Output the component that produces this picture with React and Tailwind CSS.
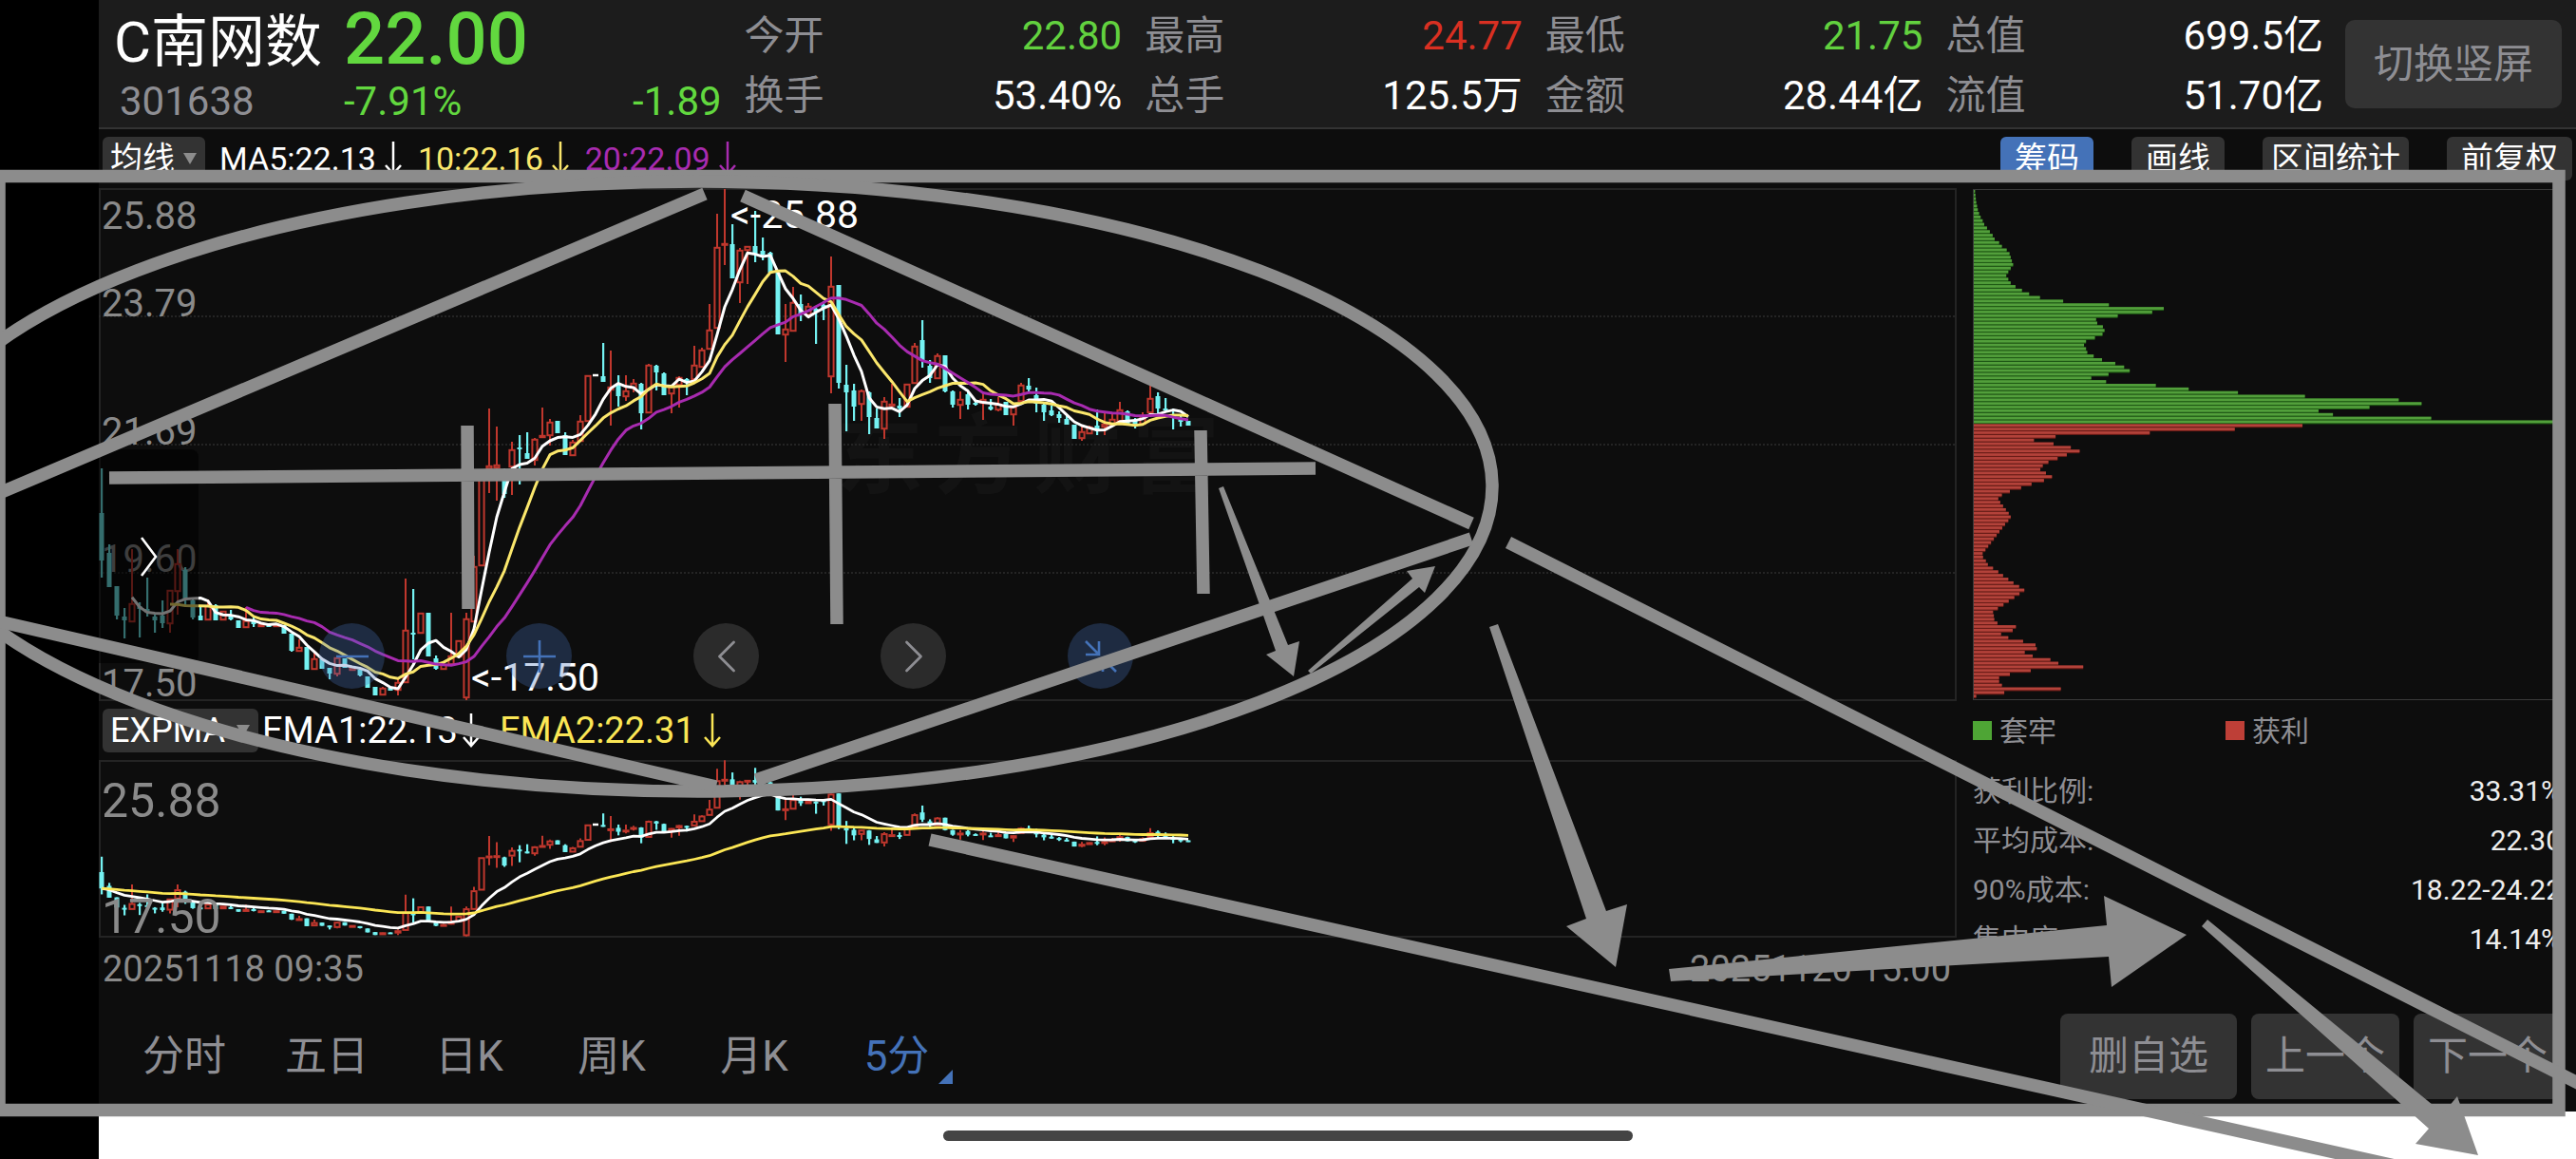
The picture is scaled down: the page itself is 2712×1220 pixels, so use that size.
import { ChevronLeft } from "lucide-react";
import clsx from "clsx";

const QUOTES = [
  [{ label: "今开", value: "22.80", cls: "text-[#62d13f]" }, { label: "换手", value: "53.40%", cls: "text-white" }],
  [{ label: "最高", value: "24.77", cls: "text-[#d93022]" }, { label: "总手", value: "125.5万", cls: "text-white" }],
  [{ label: "最低", value: "21.75", cls: "text-[#62d13f]" }, { label: "金额", value: "28.44亿", cls: "text-white" }],
  [{ label: "总值", value: "699.5亿", cls: "text-white" }, { label: "流值", value: "51.70亿", cls: "text-white" }],
];

const TOOLS = [
  { label: "筹码", cls: "bg-[#4472b8] px-[15px]" },
  { label: "画线", cls: "bg-[#333] px-[15px]" },
  { label: "区间统计", cls: "bg-[#333] px-[9px]" },
  { label: "前复权", cls: "bg-[#333] px-[15px]" },
];

const PERIODS = ["分时", "五日", "日K", "周K", "月K", "5分"];

const COSTS = [
  ["获利比例:", "33.31%"],
  ["平均成本:", "22.30"],
  ["90%成本:", "18.22-24.22"],
  ["集中度:", "14.14%"],
];

// 5-minute bars: direction, high, body top, body bottom, low (chart units, 198 = top of scale)
const BARS = `
d 493 540 590 608|d 573 582 618 618|d 617 617 648 652|d 640 649 653 672|u 578 635 655 655|d 634 638 641 671
d 608 641 645 649|d 647 649 653 666|d 632 648 656 661|u 621 621 657 666|u 578 593 623 647|d 597 600 630 637
d 631 632 650 652|d 639 648 653 653|u 631 637 653 653|d 636 637 653 653|u 643 643 653 653|d 642 647 652 653
d 653 653 661 661|u 639 653 661 661|d 650 653 657 660|u 656 657 660 660|d 656 657 660 660|u 656 657 660 660
d 658 658 667 667|d 667 667 685 686|u 673 681 686 686|d 681 681 705 705|u 685 693 705 705|d 694 694 704 704
d 703 703 709 715|u 691 692 710 712|d 693 693 703 703|u 702 702 706 706|d 705 705 711 712|d 712 712 724 724
d 723 723 732 732|u 723 724 732 732|d 724 724 727 727|u 715 718 727 732|u 609 663 719 719|d 620 666 668 694
u 645 645 667 667|d 645 645 691 691|d 690 693 704 705|u 697 699 705 705|u 645 690 700 701|u 674 674 692 692
u 645 651 735 737|u 585 596 655 655|u 495 495 596 596|u 430 490 494 519|u 449 489 493 527|d 493 495 520 524
u 465 473 492 521|d 458 471 473 510|d 455 477 483 483|u 461 462 485 490|u 429 458 461 461|u 441 444 459 469
d 443 443 456 456|d 455 458 479 479|u 463 465 480 480|u 437 443 465 465|u 395 395 444 444|n 395 395 397 397
d 361 396 402 402|u 369 407 411 448|d 395 405 417 428|u 395 411 418 422|u 399 403 409 413|d 403 404 435 452
u 383 384 435 435|d 384 385 392 411|d 392 393 416 416|u 405 406 415 435|u 396 397 406 429|d 398 399 402 416
u 364 384 400 400|u 366 368 387 387|u 320 347 368 368|u 225 260 346 346|u 199 256 258 279|d 236 257 293 293
u 261 263 298 319|u 259 259 264 299|d 222 259 267 276|d 250 264 268 274|d 265 266 287 287|d 287 287 352 352
u 320 346 353 381|u 302 318 349 349|d 310 320 330 338|u 319 322 332 332|d 324 325 328 362|d 317 321 324 337
u 270 301 397 414|d 300 300 403 409|d 384 405 413 454|d 404 411 428 443|u 410 411 426 443|d 412 413 439 457
d 430 440 451 451|u 418 422 452 462|u 404 425 428 428|d 419 427 430 439|u 404 404 429 429|u 361 364 404 404
d 337 358 380 387|d 379 385 398 403|u 372 374 399 399|d 374 374 412 413|d 411 412 426 429|u 412 420 427 441
d 412 415 426 431|d 422 424 426 427|u 414 420 425 442|d 420 428 431 432|u 418 425 432 433|d 423 423 437 437
u 427 428 437 448|u 403 405 423 423|d 398 406 410 414|d 408 416 425 434|d 423 426 434 443|d 427 432 437 438
d 433 436 440 445|d 436 441 447 447|d 447 447 462 462|u 448 454 462 464|u 448 449 457 457|d 431 448 452 458
u 434 446 450 458|u 436 441 448 448|u 423 431 444 447|d 432 433 446 446|d 440 443 449 451|u 434 437 447 447
u 406 419 435 435|d 413 417 430 436|d 419 430 432 432|d 430 436 440 452|d 438 440 444 449|d 443 443 448 448`
  .trim()
  .split(/[|\n]/)
  .map((row) => {
    const [dir, ...nums] = row.split(" ");
    const [high, top, bottom, low] = nums.map((n) => Number(n) - 198);
    return { dir, high, top, bottom, low, close: dir === "u" ? top : bottom };
  });

const TRAPPED = [
  3, 4, 5, 6, 8, 10, 13, 17, 22, 26, 33, 40, 47, 52, 63, 70, 82, 89, 92, 95, 98, 92, 86, 81, 86, 92, 104, 120, 138, 165,
  223, 337, 474, 445, 359, 305, 308, 322, 326, 321, 302, 280, 275, 280, 283, 299, 320, 353, 375, 389, 336, 293, 330,
  454, 536, 659, 826, 1060, 1117, 987, 860, 896, 1141, 1468,
];
const PROFIT = [
  820, 651, 439, 204, 150, 199, 242, 264, 232, 209, 186, 172, 166, 180, 195, 175, 144, 118, 90, 70, 61, 66, 73, 80, 87,
  92, 86, 78, 71, 64, 57, 50, 43, 36, 29, 22, 23, 30, 35, 48, 61, 73, 86, 99, 113, 126, 114, 101, 87, 74, 60, 48, 50,
  51, 59, 105, 97, 68, 86, 123, 154, 157, 127, 147, 191, 211, 273, 142, 90, 63, 63, 70, 217, 76, 6,
];

const barX = (i) => 3 + i * 8;

const toPath = (points) => points.map(([x, y], i) => `${i ? "L" : "M"}${x} ${y.toFixed(1)}`).join(" ");

function movingAverage(days) {
  const points = [];
  for (let i = days - 1; i < BARS.length; i++) {
    const sum = BARS.slice(i - days + 1, i + 1).reduce((acc, b) => acc + b.close, 0);
    points.push([barX(i), sum / days]);
  }
  return toPath(points);
}

function expAverage(days, scale) {
  let ema = BARS[0].close;
  return toPath(
    BARS.map((b, i) => {
      ema += ((b.close - ema) * 2) / (days + 1);
      return [barX(i), ema * scale];
    })
  );
}

function Candles({ scale = 1 }) {
  return BARS.map((b, i) => {
    const x = barX(i);
    const y = (v) => v * scale;
    if (b.dir === "n") return <path key={i} d={`M${x - 3} ${y(b.top)}h6`} stroke="#fff" strokeWidth="2.5" />;
    if (b.dir === "d") {
      return (
        <g key={i} fill="#74f2f2">
          <rect x={x - 1} y={y(b.high)} width="2.2" height={y(b.low - b.high)} />
          <rect x={x - 2.5} y={y(b.top)} width="5" height={Math.max(y(b.bottom - b.top), 2)} />
        </g>
      );
    }
    return (
      <g key={i} stroke="#c0372d" strokeWidth="2" fill="none">
        <path d={`M${x} ${y(b.high)}V${y(b.top)}M${x} ${y(b.bottom)}V${y(b.low)}`} />
        <rect x={x - 2.6} y={y(b.top) + 0.8} width="5.2" height={Math.max(y(b.bottom - b.top) - 1.6, 1)} />
      </g>
    );
  });
}

function DownArrow() {
  return (
    <svg viewBox="0 0 20 36" className="w-5 h-9" fill="none" stroke="currentColor" strokeWidth="2.5" aria-hidden="true">
      <path d="M10 0V34M2 25l8 9 8-9" />
    </svg>
  );
}

function IndicatorSelect({ name, value, className }) {
  return (
    <label className={clsx("relative flex items-center", className)}>
      <select
        aria-label={name}
        defaultValue={value}
        className="appearance-none w-full h-[46px] rounded-md bg-[#333] text-white leading-[46px] pl-2"
      >
        <option>{value}</option>
      </select>
      <svg viewBox="0 0 14 12" className="absolute right-[9px] w-3.5 h-3 pointer-events-none" aria-hidden="true">
        <path d="M0 0h14L7 12z" fill="#8c8c8c" />
      </svg>
    </label>
  );
}

function Reading({ text, className }) {
  return (
    <span className={clsx("flex items-center", className)}>
      {text}
      <DownArrow />
    </span>
  );
}

function Header() {
  return (
    <header className="flex items-start h-[136px] bg-[#1c1c1c] border-b-2 border-[#333] pl-4 pr-[15px] text-[42px]">
      <div className="w-[242px] shrink-0 whitespace-nowrap">
        <h1 className="text-[60px] leading-[82px] pt-1 text-white">C南网数</h1>
        <p className="leading-[42px] pl-[6px] text-[#8e8e93]">301638</p>
      </div>
      <div className="grid grid-cols-5 gap-6 flex-1 leading-[63px]">
        <div className="text-[#62d83f]">
          <div className="text-[76px] font-medium leading-[82px] mb-1">22.00</div>
          <div className="flex justify-between leading-[42px]">
            <span>-7.91%</span>
            <span>-1.89</span>
          </div>
        </div>
        {QUOTES.map((rows) => (
          <dl key={rows[0].label} className="pt-[6px]">
            {rows.map(({ label, value, cls }) => (
              <div key={label} className="flex justify-between">
                <dt className="text-[#8e8e93]">{label}</dt>
                <dd className={cls}>{value}</dd>
              </div>
            ))}
          </dl>
        ))}
      </div>
      <button className="ml-[23px] mt-[21px] w-[228px] h-[93px] rounded-[10px] bg-[#333] text-[#8e8e93]">切换竖屏</button>
    </header>
  );
}

function PriceChart() {
  return (
    <div className="relative">
      <svg viewBox="0 0 1956 540" className="block w-full overflow-visible" role="img" aria-label="5分钟K线">
        <g fontSize="92" fontWeight="700" fill="#131313">
          {["东", "方", "财", "富"].map((ch, i) => (
            <text key={ch} x={776 + i * 104} y="314">{ch}</text>
          ))}
        </g>
        <rect x="1" y="1" width="1954" height="538" fill="none" stroke="#242424" strokeWidth="2" />
        <path d="M0 135H1956M0 270H1956M0 405H1956" stroke="#2c2c2c" strokeWidth="1.5" strokeDasharray="2 2" />
        <g fontSize="40" fill="#8a8a8a">
          <text x="3" y="43">25.88</text>
          <text x="3" y="135">23.79</text>
          <text x="3" y="270">21.69</text>
          <text x="3" y="404">19.60</text>
          <text x="3" y="535">17.50</text>
        </g>
        <Candles />
        <g fill="none" strokeWidth="3" strokeLinejoin="round">
          <path d={movingAverage(5)} stroke="#fff" />
          <path d={movingAverage(10)} stroke="#fbe76c" />
          <path d={movingAverage(20)} stroke="#a82bb0" />
        </g>
        <g fontSize="41" fill="#fff">
          <text x="665" y="42">&lt;-25.88</text>
          <text x="392" y="529">&lt;-17.50</text>
        </g>
      </svg>

      {/* side drawer handle */}
      <button aria-label="展开" className="absolute left-0 top-[275px] w-[105px] h-[225px] rounded-r-lg bg-black/55 pl-11">
        <svg viewBox="0 0 18 42" className="w-[18px] h-[42px]" fill="none" stroke="#fff" strokeWidth="2.6">
          <path d="M1 1l15 20L1 41" />
        </svg>
      </button>

      {/* zoom and pan */}
      <div className="absolute left-[232px] bottom-[13px] flex gap-32 text-[#4472b8]">
        <button aria-label="缩小" className="size-[69px] rounded-full bg-[#4472b8]/30 flex items-center justify-center">
          <svg viewBox="0 0 34 34" className="size-[34px]" stroke="currentColor" strokeWidth="2.6"><path d="M0 17h34" /></svg>
        </button>
        <button aria-label="放大" className="size-[69px] rounded-full bg-[#4472b8]/30 flex items-center justify-center">
          <svg viewBox="0 0 34 34" className="size-[34px]" stroke="currentColor" strokeWidth="2.6"><path d="M0 17h34M17 0v34" /></svg>
        </button>
        <button aria-label="左移" className="size-[69px] rounded-full bg-[#2b2b2b] text-[#8e8e93] flex items-center justify-center">
          <ChevronLeft size={60} strokeWidth={1.1} />
        </button>
        <button aria-label="右移" className="size-[69px] rounded-full bg-[#2b2b2b] text-[#8e8e93] flex items-center justify-center">
          <ChevronLeft size={60} strokeWidth={1.1} className="rotate-180" />
        </button>
        <button aria-label="收起" className="size-[69px] rounded-full bg-[#4472b8]/30 flex items-center justify-center">
          <svg viewBox="0 0 36 36" className="size-9" fill="none" stroke="currentColor" strokeWidth="2.6">
            <path d="M2 2l14 14M16 2v14H2M34 34L20 20M20 34V20h14" />
          </svg>
        </button>
      </div>
    </div>
  );
}

function ExpmaChart() {
  return (
    <svg viewBox="0 0 1956 187" className="block w-full overflow-visible" role="img" aria-label="EXPMA">
      <rect x="1" y="1" width="1954" height="185" fill="none" stroke="#242424" strokeWidth="2" />
      <Candles scale={0.345} />
      <g fill="none" strokeWidth="2.8" strokeLinejoin="round">
        <path d={expAverage(12, 0.345)} stroke="#fff" />
        <path d={expAverage(50, 0.345)} stroke="#fbe655" />
      </g>
      <g fontSize="50" fill="#8a8a8a">
        <text x="3" y="60">25.88</text>
        <text x="3" y="182">17.50</text>
      </g>
    </svg>
  );
}

function ChipRows({ rows, start, bright, dark }) {
  return rows.map((w, i) => (
    <g key={i}>
      <rect x="1" y={2 + (start + i) * 3.85} width={w * 0.422} height="3.85" fill={dark} />
      <rect x="1" y={2 + (start + i) * 3.85} width={w * 0.422} height="2.7" fill={bright} />
    </g>
  ));
}

function ChipPanel() {
  return (
    <aside className="w-[620px] shrink-0 text-[30px] text-[#8e8e93]">
      <svg viewBox="0 0 620 540" className="block w-full" role="img" aria-label="筹码分布">
        <rect x="0.5" y="1.5" width="619" height="537" fill="none" stroke="#3a3a3a" />
        <ChipRows rows={TRAPPED} start={0} bright="#529f3b" dark="#1f5a14" />
        <ChipRows rows={PROFIT} start={64} bright="#b3423a" dark="#6a1c17" />
      </svg>
      <div className="flex items-center h-[62px]">
        <span className="flex items-center gap-2 w-[266px]"><i className="size-5 bg-[#4ea535]" />套牢</span>
        <span className="flex items-center gap-2"><i className="size-5 bg-[#be3f37]" />获利</span>
      </div>
      <dl className="pt-[7px]">
        {COSTS.map(([label, value]) => (
          <div key={label} className="flex justify-between leading-[52px]">
            <dt>{label}</dt>
            <dd className="text-[#eee]">{value}</dd>
          </div>
        ))}
      </dl>
    </aside>
  );
}

// hand-drawn trend marks lying over the whole screen
function Drawings() {
  return (
    <svg
      viewBox="0 0 2712 1220"
      preserveAspectRatio="none"
      className="absolute inset-0 w-full h-full pointer-events-none"
      aria-hidden="true"
    >
      <g fill="none" stroke="#8c8c8c" strokeWidth="13.5">
        <rect x="-1" y="185.5" width="2695" height="983" />
        <ellipse cx="735" cy="512" rx="836" ry="321" />
        <path d="M-10 523L742 204M782 206L1549 551M-10 652L754 828M796 821L1549 567" />
        <path d="M1588 571L2722 1144M979 884L2530 1229" />
        <path d="M492 448L493 641M879 425L881 657M1264 453L1267 625M115 503L1385 493" />
      </g>
      <g fill="#8c8c8c">
        <path d="M1283 514L1288 512L1356 679L1368 675L1362 712L1333 689L1343 685z" />
        <path d="M1377 706L1380 709L1494 618L1500 624L1511 596L1481 601L1487 609z" />
        <path d="M1568 660L1577 657L1691 959L1713 952L1701 1018L1649 975L1670 967z" />
        <path d="M1757 1020L1759 1033L2220 1007L2223 1039L2302 984L2215 943L2218 974z" />
        <path d="M2318 975L2324 968L2572 1172L2587 1154L2609 1216L2543 1204L2557 1188z" />
      </g>
    </svg>
  );
}

export default function App() {
  return (
    <div className="relative min-h-screen overflow-hidden bg-black pl-[104px] flex flex-col font-['Roboto','Noto_Sans_CJK_SC',sans-serif]">
      <div className="bg-[#0d0d0d]">
        <Header />

        {/* indicator bar */}
        <div className="flex items-center justify-between h-[62px] pl-1 pr-1 text-[34px]">
          <div className="flex items-center">
            <IndicatorSelect name="主图指标" value="均线" className="w-[108px] mr-[15px]" />
            <div className="flex gap-4">
              <Reading text="MA5:22.13" className="gap-2 text-white" />
              <Reading text="10:22.16" className="gap-2 text-[#fbe76c]" />
              <Reading text="20:22.09" className="gap-2 text-[#a82bb0]" />
            </div>
          </div>
          <div className="flex gap-10 text-white">
            {TOOLS.map(({ label, cls }) => (
              <button key={label} className={clsx("h-[46px] leading-[46px] rounded-md", cls)}>{label}</button>
            ))}
          </div>
        </div>

        <main className="flex gap-[17px] pr-[15px]">
          <div className="flex-1 min-w-0">
            <PriceChart />
            <div className="flex items-center h-[62px] pl-1 text-[38px]">
              <IndicatorSelect name="副图指标" value="EXPMA" className="w-[164px] mr-1 text-[36px]" />
              <div className="flex gap-5">
                <Reading text="EMA1:22.13" className="gap-1 text-white" />
                <Reading text="EMA2:22.31" className="gap-2 text-[#fbe655]" />
              </div>
            </div>
            <ExpmaChart />
            <div className="flex justify-between pl-1 pr-[6px] text-[38px] leading-[66px] text-[#8a8a8a]">
              <time>20251118 09:35</time>
              <time>20251120 15:00</time>
            </div>
          </div>
          <ChipPanel />
        </main>

        <footer className="flex items-center justify-between h-[117px] pl-[15px] pr-[15px]">
          <nav className="flex text-[44px] text-[#8e8e93]">
            {PERIODS.map((p) => (
              <button key={p} className={clsx("relative w-[150px]", p === "5分" && "text-[#4472b8]")}>
                {p}
                {p === "5分" && (
                  <svg viewBox="0 0 15 15" className="absolute right-4 bottom-1 size-[15px]" aria-hidden="true">
                    <path d="M15 0v15H0z" fill="#4472b8" />
                  </svg>
                )}
              </button>
            ))}
          </nav>
          <div className="flex gap-[15px] text-[42px] text-[#8e8e93]">
            <button className="h-[90px] px-[30px] rounded-lg bg-[#333]">删自选</button>
            <button className="h-[90px] px-[15px] rounded-lg bg-[#333]">上一个</button>
            <button className="h-[90px] px-[15px] rounded-lg bg-[#333]">下一个</button>
          </div>
        </footer>
      </div>

      {/* system gesture area */}
      <div className="flex-1 min-h-10 bg-white flex justify-center items-center">
        <div className="w-[726px] h-[11px] -ml-[104px] rounded-full bg-[#444]" />
      </div>

      <Drawings />
    </div>
  );
}
